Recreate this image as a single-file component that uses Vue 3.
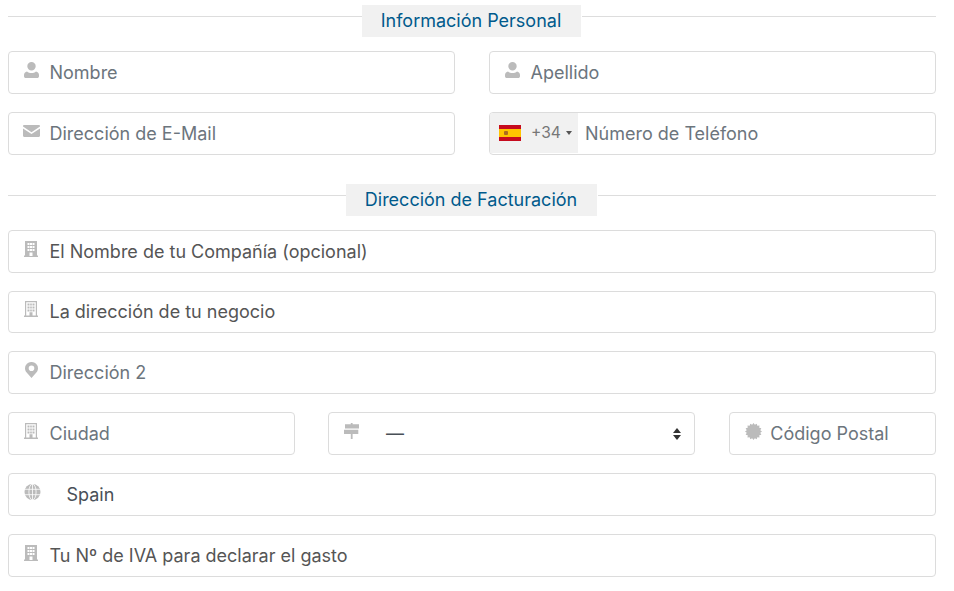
<script setup>
const icons = {
  user: 'M7.5 0a4 4 0 1 1 0 8.4a4 4 0 1 1 0-8.4zM3 9.4c1.2 1 2.8 1.5 4.500 1.500s3.300-.5 4.500-1.500c1.800.3 3 1.700 3 3.600v1.200c0 1-.8 1.800-1.800 1.800H1.800C.8 16 0 15.200 0 14.200V13c0-1.900 1.200-3.300 3-3.600z',
  mail: 'M0 1.200C0 .5.500 0 1.200 0h14.600c.7 0 1.200.5 1.200 1.200v.4L8.500 7.300 0 1.600zM0 3.400l8.500 5.700L17 3.400v7.400c0 .7-.5 1.200-1.200 1.200H1.200C.5 12 0 11.500 0 10.800z',
  solid: 'M1 0h12v14.500h1V16H0v-1.500h1zM3.500 2v2h2V2zm2.500 0v2h2V2zm2.500 0v2h2V2zM3.500 5v2h2V5zM6 5v2h2V5zm2.500 0v2h2V5zM3.500 8v2h2V8zM6 8v2h2V8zm2.500 0v2h2V8zM5.500 11.500V15h3v-3.500z',
  outline: 'M1 0h12v14.500h1V16H0v-1.500h1zM2.200 1.200v13.300h3.300v-3.300h3v3.300h3.300V1.200zM3.500 2.500h2v2h-2zm2.700 0h1.600v2H6.200zm2.300 0h2v2h-2zM3.500 5.500h2v2h-2zm2.700 0h1.600v2H6.200zm2.300 0h2v2h-2zM3.500 8.500h2v2h-2zm2.700 0h1.600v2H6.200zm2.300 0h2v2h-2z',
  pin: 'M6.500 0A6.300 6.300 0 0 1 13 6.300c0 1.500-.5 2.600-1.200 3.800L6.500 16 1.200 10.100C.5 8.900 0 7.800 0 6.300A6.300 6.300 0 0 1 6.500 0zm0 3.500a2.800 2.800 0 1 0 0 5.600a2.800 2.800 0 1 0 0-5.600z',
  signs: 'M6.800 0h1.800v1.200H15V5.500H1V1.200h5.800zM0 6.800h14.300v4.200H8.600v5H6.800v-5H0z'
}

// certificate seal: 16 small teeth round a disc
const seal = Array.from({ length: 32 }, (_, i) => {
  const r = i % 2 ? 6.9 : 8.5
  const a = (i * Math.PI) / 16
  return `${(8.5 + r * Math.sin(a)).toFixed(2)},${(8.5 - r * Math.cos(a)).toFixed(2)}`
}).join(' ')
</script>

<template>
  <form class="billing-form">
    <div class="section-title">
      <span class="rule"></span>
      <h3 class="first-title">Información Personal</h3>
      <span class="rule"></span>
    </div>

    <div class="row two-col">
      <div class="field">
        <span class="slot"><svg width="15" height="16" viewBox="0 0 15 16"><path :d="icons.user" /></svg></span>
        <span class="holder">Nombre</span>
      </div>
      <div class="field">
        <span class="slot"><svg width="15" height="16" viewBox="0 0 15 16"><path :d="icons.user" /></svg></span>
        <span class="holder">Apellido</span>
      </div>
    </div>

    <div class="row two-col">
      <div class="field">
        <span class="slot mail"><svg width="17" height="12" viewBox="0 0 17 12"><path :d="icons.mail" /></svg></span>
        <span class="holder">Dirección de E-Mail</span>
      </div>
      <div class="field phone">
        <div class="dial">
          <svg class="flag" width="22" height="16" viewBox="0 0 22 16">
            <rect width="22" height="16" fill="#c60b1e" />
            <rect y="4" width="22" height="8" fill="#ffc400" />
            <rect x="5" y="6" width="4" height="4" rx="1" fill="#ad6a1e" />
          </svg>
          <span class="code">+34</span>
          <span class="caret"></span>
        </div>
        <span class="holder">Número de Teléfono</span>
      </div>
    </div>

    <div class="section-title second">
      <span class="rule"></span>
      <h3 class="second-title">Dirección de Facturación</h3>
      <span class="rule"></span>
    </div>

    <div class="row">
      <div class="field">
        <span class="slot"><svg width="14" height="16" viewBox="0 0 14 16"><path fill-rule="evenodd" :d="icons.solid" /></svg></span>
        <span class="holder dark">El Nombre de tu Compañía (opcional)</span>
      </div>
    </div>
    <div class="row">
      <div class="field">
        <span class="slot"><svg width="14" height="16" viewBox="0 0 14 16"><path fill-rule="evenodd" :d="icons.outline" /></svg></span>
        <span class="holder dark">La dirección de tu negocio</span>
      </div>
    </div>
    <div class="row">
      <div class="field">
        <span class="slot pin"><svg width="13" height="16" viewBox="0 0 13 16"><path fill-rule="evenodd" :d="icons.pin" /></svg></span>
        <span class="holder">Dirección 2</span>
      </div>
    </div>

    <div class="row three-col">
      <div class="field">
        <span class="slot"><svg width="14" height="16" viewBox="0 0 14 16"><path fill-rule="evenodd" :d="icons.outline" /></svg></span>
        <span class="holder">Ciudad</span>
      </div>
      <div class="field select">
        <span class="slot"><svg width="15" height="16" viewBox="0 0 15 16"><path :d="icons.signs" /></svg></span>
        <span class="value state">—</span>
        <span class="arrows"></span>
      </div>
      <div class="field">
        <span class="slot"><svg width="17" height="17" viewBox="0 0 17 17"><polygon :points="seal" /></svg></span>
        <span class="holder">Código Postal</span>
      </div>
    </div>

    <div class="row">
      <div class="field select">
        <span class="slot">
          <svg width="17" height="16" viewBox="0 0 16 16">
            <circle cx="8" cy="8" r="8" />
            <g class="globe-lines">
              <ellipse cx="8" cy="8" rx="3.600" ry="8" />
              <path d="M8 0v16M0 5.300h16M0 10.700h16" />
            </g>
          </svg>
        </span>
        <span class="value country">Spain</span>
      </div>
    </div>
    <div class="row">
      <div class="field">
        <span class="slot"><svg width="14" height="16" viewBox="0 0 14 16"><path fill-rule="evenodd" :d="icons.solid" /></svg></span>
        <span class="holder dark">Tu Nº de IVA para declarar el gasto</span>
      </div>
    </div>
  </form>
</template>

<style>
html,
body {
  margin: 0;
  background: #fff;
}
</style>

<style scoped>
.billing-form {
  width: 928px;
  padding: 5px 18px 0 8px;
  font-family: Inter, "Liberation Sans", sans-serif;
  font-size: 18px;
}

.section-title {
  display: flex;
  align-items: flex-start;
  margin-bottom: 14px;
}

.section-title.second {
  margin-top: 29.2px;
}

.rule {
  flex: 1;
  height: 1px;
  margin-top: 11px;
  background: #ddd;
}

.section-title h3 {
  margin: 0 1px 0 -1px;
  height: 32px;
  line-height: 32px;
  background: #f1f1f1;
  color: #005a8c;
  font-size: 18px;
  font-weight: 400;
  text-align: center;
}

.first-title {
  width: 219px;
}

.second-title {
  width: 251px;
}

.row {
  margin-bottom: 18px;
}

.two-col {
  display: grid;
  grid-template-columns: 447px 447px;
  column-gap: 34px;
}

.three-col {
  display: grid;
  grid-template-columns: 287px 367px 207px;
  column-gap: 33.4px;
}

.field {
  display: flex;
  align-items: center;
  box-sizing: border-box;
  height: 42.8px;
  padding-left: 15px;
  border: 1px solid #dcdcdc;
  border-radius: 4px;
  background: #fff;
}

.slot {
  display: flex;
  flex-shrink: 0;
  width: 25.5px;
  margin-top: -5px;
  fill: #bbb;
}

.slot.mail {
  margin-left: -1px;
  width: 26.5px;
}

.slot.pin {
  margin-left: 1px;
  width: 24.5px;
}

.globe-lines {
  fill: none;
  stroke: #fff;
  stroke-width: 0.8;
}

.holder {
  color: #6c757d;
}

.holder.dark {
  color: #555;
}

.value {
  color: #495057;
}

.state {
  margin-left: 16px;
}

.country {
  margin-left: 17px;
}

.phone {
  padding-left: 0;
  overflow: hidden;
}

.dial {
  display: flex;
  align-items: center;
  align-self: stretch;
  width: 88px;
  flex-shrink: 0;
  padding-left: 9px;
  box-sizing: border-box;
  margin-bottom: 1px;
  background: #f1f1f1;
}

.code {
  margin-left: 10px;
  color: #777;
  font-size: 15.6px;
}

.caret {
  width: 0;
  height: 0;
  margin-left: 5px;
  border-left: 3px solid transparent;
  border-right: 3px solid transparent;
  border-top: 4px solid #555;
}

.phone .holder {
  margin-left: 7px;
}

.select {
  position: relative;
}

.arrows {
  position: absolute;
  right: 13px;
  top: 15px;
  width: 0;
  height: 0;
  border-left: 4.5px solid transparent;
  border-right: 4.5px solid transparent;
  border-bottom: 5px solid #333;
}

.arrows::after {
  content: "";
  position: absolute;
  left: -4.5px;
  top: 7px;
  width: 0;
  height: 0;
  border-left: 4.5px solid transparent;
  border-right: 4.5px solid transparent;
  border-top: 5px solid #333;
}
</style>
